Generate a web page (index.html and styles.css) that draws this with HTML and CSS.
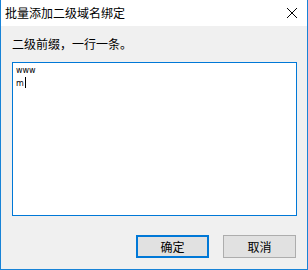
FILE: index.html
```html
<!DOCTYPE html>
<html lang="zh-CN">
<head>
    <meta charset="UTF-8">
    <title>批量添加二级域名绑定</title>
    <link rel="stylesheet" href="styles.css">
</head>
<body>
    <div class="window">
        <div class="titlebar">
            <span class="title">批量添加二级域名绑定</span>
            <svg class="close" width="12" height="12" viewBox="0 0 12 12">
                <path d="M1 1 L11 11 M11 1 L1 11" stroke="#000" stroke-width="1"/>
            </svg>
        </div>
        <div class="content">
            <div class="label">二级前缀，一行一条。</div>
            <div class="editor">
                <div class="line">www</div>
                <div class="line">m<span class="caret"></span></div>
            </div>
            <div class="buttons">
                <button class="btn default">确定</button>
                <button class="btn">取消</button>
            </div>
        </div>
    </div>
</body>
</html>
```

FILE: styles.css
```css
body {
    margin: 0;
    font-family: "Noto Sans CJK SC", "Noto Sans", sans-serif;
    font-size: 12px;
    color: #000;
}
.window {
    width: 308px;
    height: 270px;
    box-sizing: border-box;
    border: 1px solid #1883d7;
    border-top: none;
    display: flex;
    flex-direction: column;
    background-color: #f0f0f0;
}
.titlebar {
    height: 26px;
    background-color: #fff;
    display: flex;
    align-items: center;
    justify-content: space-between;
    padding: 0 9px 0 4px;
}
.title {
    font-size: 12px;
    line-height: 16px;
}
.content {
    flex: 1;
    display: flex;
    flex-direction: column;
    padding: 10px 10px 0 11px;
}
.label {
    font-size: 12px;
    line-height: 16px;
}
.editor {
    margin-top: 10px;
    height: 154px;
    box-sizing: border-box;
    background-color: #fff;
    border: 1px solid #0078d7;
    padding: 2px 3px;
    font-family: "DejaVu Sans", sans-serif;
    font-size: 8px;
    line-height: 12px;
}
.caret {
    display: inline-block;
    width: 1px;
    height: 11px;
    background-color: #000;
    vertical-align: -2px;
    margin-left: 1px;
}
.buttons {
    margin-top: 19px;
    display: flex;
    justify-content: flex-end;
    gap: 14px;
    padding-right: 1px;
}
.btn {
    width: 73px;
    height: 23px;
    box-sizing: border-box;
    background-color: #e1e1e1;
    border: 1px solid #adadad;
    font-family: inherit;
    font-size: 12px;
    padding: 0;
}
.btn.default {
    border: 2px solid #0078d7;
}
```
